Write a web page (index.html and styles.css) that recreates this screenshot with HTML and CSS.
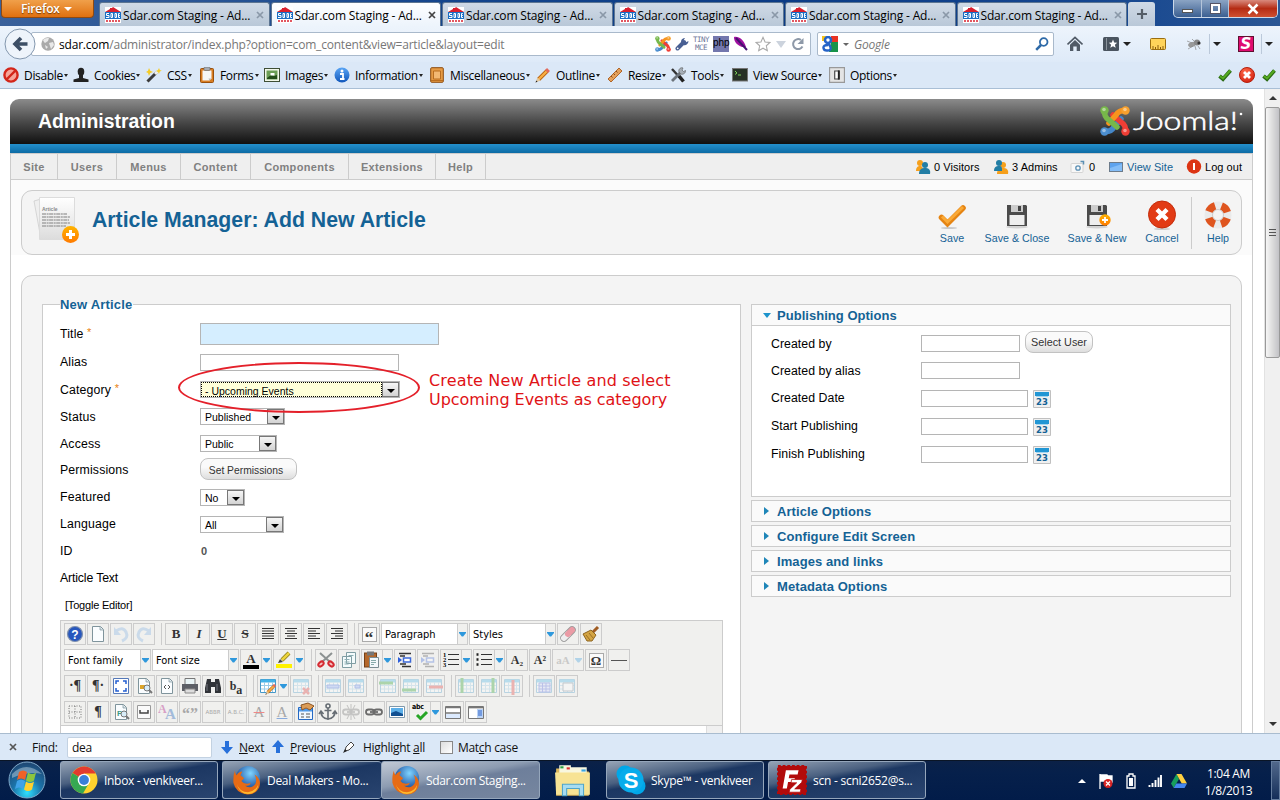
FILE: index.html
```html
<!DOCTYPE html>
<html lang="en">
<head>
<meta charset="utf-8">
<title>Sdar.com Staging - Administration</title>
<link rel="stylesheet" href="styles.css">
</head>
<body>
<svg class="gradients" aria-hidden="true">
  <defs>
    <linearGradient id="gOrange" x1="0" y1="0" x2="0" y2="1"><stop offset="0" stop-color="#ffb400"/><stop offset="1" stop-color="#ff7a00"/></linearGradient>
    <radialGradient id="gRed" cx=".4" cy=".3" r=".8"><stop offset="0" stop-color="#ff6a4a"/><stop offset="1" stop-color="#d01c0c"/></radialGradient>
    <linearGradient id="gBlue" x1="0" y1="0" x2="0" y2="1"><stop offset="0" stop-color="#5aa5f5"/><stop offset="1" stop-color="#1157bb"/></linearGradient>
    <radialGradient id="gFox" cx=".6" cy=".3" r=".7"><stop offset="0" stop-color="#7fd4ff"/><stop offset="1" stop-color="#113f94"/></radialGradient>
    <radialGradient id="gOrb" cx=".5" cy=".85" r=".9"><stop offset="0" stop-color="#2fe0ff"/><stop offset=".45" stop-color="#1b72a8"/><stop offset="1" stop-color="#20406a"/></radialGradient>
    <linearGradient id="gPaper" x1="0" y1="0" x2="0" y2="1"><stop offset="0" stop-color="#fff"/><stop offset="1" stop-color="#dcdcdc"/></linearGradient>
  </defs>
</svg>
<svg class="sprite" aria-hidden="true">
  <symbol id="fav" viewBox="0 0 16 16"><path fill="#fff" d="M0 0h16v16H0z"/><path fill="#d9202e" d="M0 5 5 2V1h2l1-1 8 5z"/><rect y="5" width="16" height="7" fill="#1a6fc4"/><path d="M4 6.500H1.500v2H4v2H1M6 6.500v4h1.500v-4zM10 6.500v4h1.500v-4zM14.800 6.500H13.500v4h1.500M13.500 8.500h1.300" stroke="#fff" fill="none"/><path d="M1 14h14" stroke="#d9202e" stroke-width="1.500" stroke-dasharray="2 1"/></symbol>
  <symbol id="cross" viewBox="0 0 8 8"><path d="m1 1 6 6m0-6-6 6" stroke="currentColor" stroke-width="1.700"/></symbol>
  <symbol id="plus" viewBox="0 0 12 12"><path d="M6 1v10M1 6h10" stroke="#555e68" stroke-width="2.200"/></symbol>
  <symbol id="back" viewBox="0 0 32 32"><circle cx="16" cy="16" r="15" fill="#eef4fb" stroke="#8397ae"/><path d="M23.500 16H11m6-6-6 6 6 6" fill="none" stroke="#3d4f66" stroke-width="3.600"/></symbol>
  <symbol id="globe" viewBox="0 0 14 14"><circle cx="7" cy="7" r="6.700" fill="#aaa"/><path d="M2 3c2-2 4-2 6-2L7 4 4 6 3 5zM8 6l4-1 1 3-3 4-1-3zM4 8l3 2-2 2z" fill="#e9e9e9"/></symbol>
  <symbol id="joomla" viewBox="0 0 30 30"><g fill="none" stroke-width="5.500" stroke-linecap="round"><path id="jarm" d="M4.500 4.500Q4 11 9 14L17 21" stroke="#4587c8" transform="rotate(-90 15 15)"/><path d="M4.500 4.500Q4 11 9 14L17 21" stroke="#ef3e35" transform="rotate(180 15 15)"/><path d="M4.500 4.500Q4 11 9 14L17 21" stroke="#f7941e" transform="rotate(90 15 15)"/><path d="M4.500 4.500Q4 11 9 14L17 21" stroke="#77b84a"/></g><circle cx="4.500" cy="4.500" r="4.200" fill="#77b84a"/><circle cx="25.500" cy="4.500" r="4.200" fill="#f7a02e"/><circle cx="25.500" cy="25.500" r="4.200" fill="#ef3e35"/><circle cx="4.500" cy="25.500" r="4.200" fill="#4c8fd0"/><g fill="#fff" opacity=".45"><circle cx="4" cy="3.500" r="1.800"/><circle cx="25" cy="3.500" r="1.800"/><circle cx="25" cy="24.500" r="1.800"/><circle cx="4" cy="24.500" r="1.800"/></g></symbol>
  <symbol id="wrench" viewBox="0 0 14 14"><path d="M2.500 11.500 9 5" stroke="#485f93" stroke-width="4" stroke-linecap="round"/><path d="M6 5c0-3 2-4 4-4L8.500 3.500l2 2L13.500 4c0 3-3 5-5 4z" fill="#485f93"/><circle cx="2.700" cy="11.300" r=".9" fill="#fff"/></symbol>
  <symbol id="quill" viewBox="0 0 14 16"><path d="M0 1c5-1 10 3 12 10l-4 0C3 9 0 6 0 1z" fill="#a010a0"/><path d="m2 2 11 12" stroke="#451070" stroke-width="2"/></symbol>
  <symbol id="star" viewBox="0 0 18 18"><path d="m9 1.500 2.300 5.200 5.500.6-4.100 3.700 1.200 5.500L9 13.700l-4.900 2.800 1.200-5.500-4.100-3.700 5.500-.6z" fill="#fff" stroke="#a9a9a9" stroke-width="1.200"/></symbol>
  <symbol id="reload" viewBox="0 0 14 14"><path d="M11.500 9.500A5 5 0 1 1 10 3" fill="none" stroke="#8e99a8" stroke-width="2"/><path d="M12.500 1v6h-6z" fill="#8e99a8"/></symbol>
  <symbol id="google" viewBox="0 0 16 16"><path fill="#fff" d="M0 0h16v16H0z"/><path d="M9 0h7v6H9z" fill="#ea3323"/><path d="M9 6h7v10H7z" fill="#17934a"/><path d="M0 0h4v5H0z" fill="#f6c31a"/><circle cx="6" cy="4" r="3" fill="#fff" stroke="#2463c7" stroke-width="2.600"/><path d="m6 7 2 3q2 4-2 4.500T1.500 12 6 9" fill="#fff" stroke="#2463c7" stroke-width="2.400"/></symbol>
  <symbol id="search" viewBox="0 0 14 14"><circle cx="8.700" cy="5" r="3.800" fill="none" stroke="#2e6aa8" stroke-width="1.800"/><path d="M6 8 1.200 12.800" stroke="#2e6aa8" stroke-width="2.500"/></symbol>
  <symbol id="home" viewBox="0 0 16 16"><path d="M.5 8.500 8 1.500l7.500 7" fill="none" stroke="#505a66" stroke-width="1.700"/><path d="m3 8.700 5-4.600 5 4.600V15H9.700v-4.500H6.300V15H3z" fill="#505a66"/></symbol>
  <symbol id="bookmark" viewBox="0 0 16 14"><rect width="16" height="14" rx="1.500" fill="#4a545f"/><path d="M3.500 1v12" stroke="#8b949d"/><path d="m10 2.500 1.200 3 3 .3-2.300 2 .8 3L10 9.200l-2.700 1.600.8-3-2.300-2 3-.3z" fill="#fff"/></symbol>
  <symbol id="rulerY" viewBox="0 0 16 12"><rect x=".5" y=".5" width="15" height="11" rx="1" fill="#ffd35a" stroke="#9a6d10"/><path d="M3 11V8m2.500 3V9M8 11V7m2.500 4V9M13 11V8" stroke="#8a5d10"/></symbol>
  <symbol id="fly" viewBox="0 0 16 14"><ellipse cx="6" cy="7.500" rx="4" ry="2.500" fill="#999" transform="rotate(-20 6 7.500)"/><circle cx="11" cy="5.500" r="3" fill="#888"/><circle cx="13" cy="6" r="1.600" fill="#333"/><path d="M1 4l5 2m-4 6 5-3m3 4-1-4m5 3-2-3M6 2l3 3" stroke="#888" stroke-width=".7"/></symbol>
  <symbol id="check" viewBox="0 0 14 12"><path d="m1.500 7 3.500 3L12.500 1.500" fill="none" stroke="#2b6a14" stroke-width="3.800"/><path d="m1.800 7 3.200 2.500 7.200-8" fill="none" stroke="#55aa20" stroke-width="2"/></symbol>
  <symbol id="redx" viewBox="0 0 16 16"><circle cx="8" cy="8" r="7.500" fill="url(#gRed)" stroke="#b5200e"/><path d="m5 5 6 6m0-6-6 6" stroke="#fff" stroke-width="2.800"/></symbol>
  <symbol id="deny" viewBox="0 0 16 16"><circle cx="8" cy="8" r="6.600" fill="#f6a59a" stroke="#d3261a" stroke-width="2.400"/><path d="m12.500 3.500-9 9" stroke="#d3261a" stroke-width="2.400"/></symbol>
  <symbol id="person" viewBox="0 0 16 16"><ellipse cx="8" cy="4.800" rx="3.300" ry="4" fill="#222"/><path d="M6 8h4v3l5.500 1.500V15H.5v-2.500L6 11z" fill="#222"/></symbol>
  <symbol id="wand" viewBox="0 0 16 16"><path d="m1.500 14.500 9-9" stroke="#3b3b3b" stroke-width="3"/><path d="m9 7 2-2" stroke="#eee" stroke-width="3"/><path d="m3 1 1.300 2.700L7 5 4.300 6 3 9 2 6 0 5l2-1.300zM13 1l.8 2 2 .8-2 .8L13 7l-1-2-2-1 2-1z" fill="#f5cc27"/></symbol>
  <symbol id="clip" viewBox="0 0 16 16"><rect x="1.500" y="1.500" width="13" height="14" rx="1" fill="#d87d22" stroke="#9a500c"/><path d="M3.500 3.500h9v8l-2 2h-7z" fill="#f6f6f6"/><path d="M12.500 11.500h-3l1 2z" fill="#bbb"/><rect x="5" width="6" height="3.500" rx="1" fill="#a6aab0" stroke="#666" stroke-width=".6"/></symbol>
  <symbol id="image" viewBox="0 0 16 14"><rect x=".5" y=".5" width="15" height="13" fill="#f2f7ea" stroke="#3f4f36"/><path d="M2.500 2.500h11v9h-11z" fill="#6b9d55"/><path d="M3 10 7 7l3 1 3-1v4H3z" fill="#244d1a"/><path d="M6.500 5h4v2.500h-4z" fill="#fff"/></symbol>
  <symbol id="info" viewBox="0 0 16 16"><circle cx="8" cy="8" r="7.500" fill="url(#gBlue)"/><circle cx="8" cy="4" r="1.500" fill="#fff"/><path d="M6 7h3v5h1.500M6 12h3" stroke="#fff" stroke-width="1.800" fill="none"/></symbol>
  <symbol id="book" viewBox="0 0 14 16"><rect x=".7" y=".7" width="12.600" height="14.600" rx="1" fill="#e69b45" stroke="#8c4b0e"/><path d="M3.500 4h7v8h-7zM1 13.500h12" fill="#f3b872" stroke="#b96d1f"/></symbol>
  <symbol id="pencil" viewBox="0 0 16 16"><path d="M3.500 12.500 12 4" stroke="#b45f12" stroke-width="4"/><path d="M3.500 12.500 12 4" stroke="#f9ae43" stroke-width="2.400"/><path d="m11.500 4.500 2-2" stroke="#e36a5c" stroke-width="4"/><path d="m2.500 10.500 3 3L.5 15.500z" fill="#e3c79c"/><path d="m.5 15.500.8-2 1.300 1.200z" fill="#222"/></symbol>
  <symbol id="rule" viewBox="0 0 16 16"><path d="M1 12 12 1l3 3L4 15z" fill="#e4a05a" stroke="#b0662a"/><path d="m4 9 1.500 1.500M6.500 6.500 8 8M9 4l1.500 1.500" stroke="#8a4a18"/></symbol>
  <symbol id="tools" viewBox="0 0 16 16"><path d="m2 2 11 12" stroke="#333" stroke-width="2.400"/><path d="m9 9 4.500 5.500" stroke="#222" stroke-width="3.500"/><path d="M2 14 11 5" stroke="#6d747c" stroke-width="2.800"/><path d="M9 5c-1-3 2-5 4-4L12 3l1.500 1.500 2-1C16 6 13 8 10.500 7z" fill="#a7afb7" stroke="#555" stroke-width=".6"/></symbol>
  <symbol id="term" viewBox="0 0 16 14"><rect x=".5" y=".5" width="15" height="12.500" fill="#263126" stroke="#777"/><path d="m3 3 2 2-2 1.500M6 7h3" stroke="#7bd25a" fill="none"/></symbol>
  <symbol id="opt" viewBox="0 0 14 14"><path d="M.5.500h13v13H.5z" fill="#e4e4e4" stroke="#999"/><path d="M5 3.500h4v7H5z" fill="#fff" stroke="#444"/><path d="M8.500 3v8" stroke="#222" stroke-width="1.500"/></symbol>
  <symbol id="article" viewBox="0 0 48 50"><path d="m1 5 7-2 5 38-5 2z" fill="#efefef" stroke="#c9c9c9" stroke-width=".7"/><path d="M6.500 1.500h35v42h-35z" fill="url(#gPaper)" stroke="#dcdcdc"/><text x="9" y="15" font-family="Liberation Sans" font-weight="700" font-size="5" fill="#888">Article</text><path d="M9 18h25M9 21h28M9 24h27M9 27h28M9 30h24" stroke="#a4a4a4" stroke-width="1.300" stroke-dasharray="4 .6 2 .5"/><circle cx="37.500" cy="38.500" r="8.500" fill="url(#gOrange)"/><path d="M37.500 34v9M33 38.500h9" stroke="#fff" stroke-width="3"/></symbol>
  <symbol id="save" viewBox="0 0 30 30"><ellipse cx="12" cy="28" rx="8" ry="1" fill="#c9c9c9"/><path d="m4.500 17.500 6 6L26 8" fill="none" stroke="#e58412" stroke-width="5.600" stroke-linecap="round"/><path d="m5 16.500 5.500 5.500L26 7" fill="none" stroke="#faa936" stroke-width="3"/></symbol>
  <symbol id="floppy" viewBox="0 0 30 30"><ellipse cx="15" cy="27" rx="11" ry="1.500" fill="#d2d2d2"/><path d="M5 5h19l1 1v20H5z" fill="#4b4b4b"/><path d="M9 5h12v7H9z" fill="#ccc"/><path d="M16 6h3v5h-3z" fill="#444"/><path d="M7.500 15h15v10h-15z" fill="#eee"/></symbol>
  <symbol id="badge" viewBox="0 0 12 12"><circle cx="6" cy="6" r="5.700" fill="url(#gOrange)"/><path d="M6 3v6M3 6h6" stroke="#fff" stroke-width="1.800"/></symbol>
  <symbol id="cancel" viewBox="0 0 30 30"><ellipse cx="15" cy="29" rx="8" ry="1" fill="#ccc"/><circle cx="15" cy="14.500" r="13.500" fill="#e23b15" stroke="#c42c0a"/><path d="m10 9.500 10 10m0-10-10 10" stroke="#fff" stroke-width="4.400"/></symbol>
  <symbol id="help" viewBox="0 0 30 30"><circle cx="15" cy="15" r="9.500" fill="none" stroke="#eaeaea" stroke-width="8"/><circle cx="15" cy="15" r="9.500" fill="none" stroke="#df551f" stroke-width="8" stroke-dasharray="8.500 6.420" stroke-dashoffset="11.700"/><circle cx="15" cy="15" r="5.500" fill="#f4f4f4" stroke="#ccc"/></symbol>
  <symbol id="users" viewBox="0 0 16 16"><circle cx="5" cy="4" r="3" fill="#f6a01c"/><path d="M1 12c0-4 2-5 4-5s3 1 3 5z" fill="#f6a01c"/><circle cx="10" cy="6" r="3" fill="#237ea5"/><path d="M4 15c0-5 3-6 6-6s6 1 5 6z" fill="#237ea5"/></symbol>
  <symbol id="admins" viewBox="0 0 16 16"><circle cx="10" cy="6" r="3" fill="#f6a01c"/><path d="M4 15c0-5 3-6 6-6s6 1 5 6z" fill="#f6a01c"/><circle cx="6" cy="4" r="3" fill="#237ea5"/><path d="M1 12c0-4 2-5 5-5s3 1 3 5z" fill="#237ea5"/></symbol>
  <symbol id="mail" viewBox="0 0 16 16"><rect x="1" y="4.500" width="12" height="9" rx="1" fill="#f8f8f8" stroke="#d4d4d4"/><circle cx="8" cy="9" r="2.200" fill="none" stroke="#5b8fb4" stroke-width="1.300"/><path d="M10.500 2.500h3v3" fill="none" stroke="#5b8fb4" stroke-width="1.500"/></symbol>
  <symbol id="screen" viewBox="0 0 16 16"><rect x="1.500" y="3.500" width="13" height="9" fill="#5ea3ee" stroke="#6c7b8b"/><path d="m2 9 12-4v7H2z" fill="#84bdf7"/></symbol>
  <symbol id="power" viewBox="0 0 16 16"><circle cx="8" cy="7.500" r="7.200" fill="#dc3413"/><path d="M8 4v7" stroke="#fff" stroke-width="2"/></symbol>
  <symbol id="cal" viewBox="0 0 18 18"><path d="M.5.500h17v17H.5z" fill="#f0f0f0" stroke="#c0c0c0"/><path d="M2 2h14v4H2z" fill="#2196d4"/><path d="M3 6h12v1H3z" fill="#a5d5ee"/><text x="9" y="15" text-anchor="middle" font-family="DejaVu Sans" font-size="8.500" font-weight="700" fill="#146295">23</text></symbol>

  <symbol id="page" viewBox="0 0 20 20"><path d="M4.500 2.500h8l3 3v12h-11z" fill="#fafdff" stroke="#7f949c"/><path d="M12 3v3h3" fill="#d3e2e6" stroke="#7f949c" stroke-width=".7"/></symbol>
  <symbol id="qmark" viewBox="0 0 20 20"><circle cx="10" cy="10" r="7.500" fill="#2757bd" stroke="#8091ad" stroke-width="1.200"/><text x="10" y="14.500" font-family="Liberation Sans" font-weight="700" font-size="12" fill="#fff" text-anchor="middle">?</text></symbol>
  <symbol id="undo" viewBox="0 0 20 20"><path d="M5 7q7-5 10 1t-4 9" fill="none" stroke="#7dafe2" stroke-width="3"/><path d="M3 3v8h7z" fill="#7dafe2"/></symbol>
  <symbol id="jfull" viewBox="0 0 20 20"><path d="M4 4.500h12M4 7h12m-12 2.500h12M4 12h12M4 14.500h12" stroke="#333" stroke-width="1.200"/></symbol>
  <symbol id="jcenter" viewBox="0 0 20 20"><path d="M4 4.500h12M6 7h8m-10 2.500h12M6 12h8M4 14.500h12" stroke="#333" stroke-width="1.200"/></symbol>
  <symbol id="jleft" viewBox="0 0 20 20"><path d="M4 4.500h12M4 7h8m-8 2.500h12M4 12h8M4 14.500h12" stroke="#333" stroke-width="1.200"/></symbol>
  <symbol id="jright" viewBox="0 0 20 20"><path d="M4 4.500h12M8 7h8m-12 2.500h12M8 12h8M4 14.500h12" stroke="#333" stroke-width="1.200"/></symbol>
  <symbol id="box" viewBox="0 0 20 20"><path d="M3.500 3.500h13v13h-13z" fill="#fafafa" stroke="#999"/></symbol>
  <symbol id="eraser" viewBox="0 0 20 20"><path d="m6 14 8-8" stroke="#999" stroke-width="7.500" stroke-linecap="round"/><path d="m6 14 4-4" stroke="#eee" stroke-width="6" stroke-linecap="round"/><path d="m10 10 4-4" stroke="#eb9ba5" stroke-width="6" stroke-linecap="round"/></symbol>
  <symbol id="broom" viewBox="0 0 20 20"><path d="m12 8 5-5" stroke="#a05c22" stroke-width="3"/><path d="m2 10 8-4 5 5-4 6H6z" fill="#d3a342" stroke="#8d6420"/><path d="m5 11 4 5M8 9l4 5" stroke="#8d6420" stroke-width=".8"/></symbol>
  <symbol id="hl" viewBox="0 0 20 20"><path d="M2 14h16v4H2z" fill="#fff200"/><path d="m8 10 7-7" stroke="#8a7b18" stroke-width="4"/><path d="m8 10 7-7" stroke="#ebd43c" stroke-width="2.500"/><path d="m4 13 2-4 3 3z" fill="#444"/></symbol>
  <symbol id="cut" viewBox="0 0 20 20"><path d="m4 3 10 9m2-9L6 12" stroke="#8c9292" stroke-width="2"/><ellipse cx="5" cy="14" rx="3" ry="2" fill="#f5c3c3" stroke="#d52b32" stroke-width="2" transform="rotate(-40 5 14)"/><ellipse cx="15" cy="14" rx="3" ry="2" fill="#f5c3c3" stroke="#d52b32" stroke-width="2" transform="rotate(40 15 14)"/></symbol>
  <symbol id="copy" viewBox="0 0 20 20"><path d="M7.500 2.500h9v11h-9zM3.500 6.500h9v11h-9z" fill="#f4fbfc" stroke="#7f9da3"/><path d="M9.500 5.500h5m-9 4h5m-5 2.500h5m-5 2h4" stroke="#8daeb3"/></symbol>
  <symbol id="paste" viewBox="0 0 20 20"><rect x="2.500" y="3" width="12" height="14" fill="#b5682b" stroke="#744018"/><path d="M5 1.500h7v4H5z" fill="#777"/><path d="M7.500 7.500h9v10h-9z" fill="#f3f8fa" stroke="#7b8c92"/><path d="M9 10.500h5m-5 2h5m-5 2h3" stroke="#8aa"/></symbol>
  <symbol id="indent" viewBox="0 0 20 20"><path d="M4 3.500h12M7 16.500h9M5 6h5m-5 8h6" stroke="#333" stroke-width="1.400"/><path d="M8.500 8h7v4h-7z" fill="#fff" stroke="#3b68d8" stroke-width="1.500"/><path d="M3 7v6l4-3z" fill="#2b5ddb"/></symbol>
  <symbol id="ol" viewBox="0 0 20 20"><path d="M7 4.500h11M7 9.500h11M7 14.500h11" stroke="#333" stroke-width="1.200"/><g font-family="Liberation Serif" font-weight="700" font-size="6.500"><text x="2" y="7">1</text><text x="2" y="12">2</text><text x="2" y="17">3</text></g></symbol>
  <symbol id="ul" viewBox="0 0 20 20"><path d="M7 4.500h11M7 9.500h11M7 14.500h11" stroke="#333" stroke-width="1.200"/><path d="M2.500 4.500h2m-2 5h2m-2 5h2" stroke="#222" stroke-width="2.400"/></symbol>
  <symbol id="full" viewBox="0 0 20 20"><path d="M2.500 2.500h15v15h-15z" fill="#fff" stroke="#5478b8"/><path d="M5 8V5h3m4 0h3v3m0 4v3h-3m-4 0H5v-3" stroke="#235fd2" stroke-width="1.500" fill="none"/></symbol>
  <symbol id="print" viewBox="0 0 20 20"><path d="M5 2.500h10V9H5z" fill="#e9f4f6" stroke="#777"/><path d="M2 8h16v7H2z" fill="#5c5f66"/><path d="M5 13h10v4H5z" fill="#ddd" stroke="#888"/></symbol>
  <symbol id="bino" viewBox="0 0 20 20"><path d="M4 3h4v3h4V3h4l2 9v5h-6v-6H8v6H2v-5z" fill="#303338"/><path d="M4 8v7m10-7v7" stroke="#70757c"/></symbol>
  <symbol id="table" viewBox="0 0 20 20"><path d="M2.500 3.500h15v13h-15z" fill="#fff" stroke="#4598c8"/><path d="M3 5h14" stroke="#42b3e9" stroke-width="3"/><path d="M3 9.500h14M3 13h14M6.500 6v10m4-10v10m4-10v10" stroke="#9acbe7"/></symbol>
  <symbol id="rowg" viewBox="0 0 20 20"><use href="#table"/><path d="M1 7h14" stroke="#1f9b22" stroke-width="3"/></symbol>
  <symbol id="rowb" viewBox="0 0 20 20"><use href="#table"/><path d="M1 14h14" stroke="#1f9b22" stroke-width="3"/></symbol>
  <symbol id="rowr" viewBox="0 0 20 20"><use href="#table"/><path d="M5 11h14" stroke="#df3434" stroke-width="3"/></symbol>
  <symbol id="colg" viewBox="0 0 20 20"><use href="#table"/><path d="M6 2v15" stroke="#1f9b22" stroke-width="3"/></symbol>
  <symbol id="colh" viewBox="0 0 20 20"><use href="#table"/><path d="M14 2v15" stroke="#1f9b22" stroke-width="3"/></symbol>
  <symbol id="colr" viewBox="0 0 20 20"><use href="#table"/><path d="M11 4v15" stroke="#df3434" stroke-width="3"/></symbol>
  <symbol id="anchor" viewBox="0 0 20 20"><g fill="none" stroke="#666d74" stroke-width="1.600"><circle cx="10" cy="4" r="2"/><path d="M10 6v12M6.500 8.500h7M3 10q0 6 7 7 7-1 7-7M1 12l2-3 2.500 3m9 0L17 9l2 3"/></g></symbol>
  <symbol id="link" viewBox="0 0 20 20"><g fill="none" stroke="#6b6b6b" stroke-width="1.800"><rect x="2" y="7.500" width="8" height="5" rx="2.500"/><rect x="10" y="7.500" width="8" height="5" rx="2.500"/><path d="M6 10h8"/></g></symbol>
  <symbol id="pic" viewBox="0 0 20 20"><path d="M2.500 4.500h15v11h-15z" fill="#fff" stroke="#7f98ab"/><path d="M4 6h12v8H4z" fill="#5cafe8"/><path d="m4 11 5-2 7 3v2H4z" fill="#114f91"/></symbol>
  <symbol id="split" viewBox="0 0 20 20"><path d="M2.500 4.500h15v12h-15z" fill="#fff" stroke="#777"/><path d="M3 5.500h14M3 11h14" stroke="#777" stroke-width="1.500"/><path d="M3 12h14v4H3z" fill="#dceafe"/></symbol>
  <symbol id="tmpl" viewBox="0 0 20 20"><path d="M2.500 4.500h15v12h-15z" fill="#fff" stroke="#777"/><path d="M3 5.500h14" stroke="#777" stroke-width="1.700"/><path d="M11 7h6v9h-6z" fill="#bcd4f6"/><path d="M12 9h4m-4 2h4m-4 2h4" stroke="#2d62c9"/></symbol>
  <symbol id="dots" viewBox="0 0 20 20"><path d="M4 4h12v12H4zM10 4v12M4 10h12" fill="none" stroke="#777" stroke-dasharray="1 1.500"/></symbol>

  <symbol id="adown" viewBox="0 0 12 14"><path d="M4 1h4v6h4l-6 7-6-7h4z" fill="#2770da"/></symbol>
  <symbol id="marker" viewBox="0 0 14 14"><path d="m4 7 5-5 3 3-5 5-4 1z" fill="#fff" stroke="#444"/><path d="m1 13 2-4 2 2z" fill="#222"/></symbol>
  <symbol id="orb" viewBox="0 0 38 38"><circle cx="19" cy="19" r="18" fill="url(#gOrb)" stroke="#7fa9ca"/><path d="M4 13Q18-1 34 13 20 10 4 17z" fill="#fff" opacity=".35"/><path d="M11 11q4-3 8 0l-2 8q-4-3-8 0z" fill="#ef6227"/><path d="M20 11.500q4 3 8 0l-2 8q-4 3-8 0z" fill="#8cc63e"/><path d="M9 20q4-3 8 0l-2 8q-4-3-8 0z" fill="#3fa2e8"/><path d="M18 20.500q4 3 8 0l-2 8q-4 3-8 0z" fill="#ffd02e"/></symbol>
  <symbol id="chrome" viewBox="0 0 28 28"><circle cx="14" cy="14" r="13.500" fill="#ffd22e"/><path d="M14 14 2.500 7A13.500 13.500 0 0 1 25.800 7.500H14z" fill="#e33b2e"/><path d="M2.500 7A13.500 13.500 0 0 0 13 27.500L19 17l-5-3z" fill="#36a852"/><circle cx="14" cy="14" r="6.300" fill="#fff"/><circle cx="14" cy="14" r="4.900" fill="#3a7fd9"/></symbol>
  <symbol id="firefox" viewBox="0 0 32 32"><circle cx="17" cy="14" r="13" fill="url(#gFox)"/><path d="M3 6q0 3 2 5 2-4 6-4l-2 4 4 3-3 3q4 5 10 2-1 4-6 3 7 4 11-2 2-5-1-10 8 5 5 14-4 8-13 7.500Q4 30 1.500 19 1 11 3 6z" fill="#e66b15"/><path d="M5 20q3 9 12 9 8-1 11-8-1 9-11 10-9 0-12-11z" fill="#ffba2d"/></symbol>
  <symbol id="folder" viewBox="0 0 36 32"><path d="M2 5h13l2 3h16v23H2z" fill="#dcb75b"/><path d="M5 2h11v8H5zM16 4h15v7H16z" fill="#f8f7df"/><path d="M6 3h3v2H6z" fill="#2ca245"/><path d="M12 4h3v2h-3z" fill="#d33"/><path d="M26 6h4v2h-4z" fill="#38a5e1"/><path d="M1 9h33v21H2z" fill="#f7e394"/><path d="M8 31V20h20v11h-4v-7H12v7z" fill="#a6dcf2" stroke="#4ea5cb"/></symbol>
  <symbol id="skype" viewBox="0 0 30 30"><circle cx="9" cy="9" r="8.500" fill="#00a7e8"/><circle cx="21" cy="21" r="8.500" fill="#00a7e8"/><circle cx="15" cy="15" r="12.500" fill="#08aceb"/><text x="15" y="23" text-anchor="middle" font-family="Liberation Sans" font-size="22" font-weight="700" fill="#fff">S</text></symbol>
  <symbol id="zilla" viewBox="0 0 32 32"><path d="M1 1h30v30H1z" fill="#b20b0b" stroke="#b20b0b" stroke-width="2" stroke-dasharray="3 2"/><path d="M6 25 9.500 5.500H23L22 10h-8.700l-.8 4H19l-.7 4h-6.500L10.500 25z" fill="#fff"/><path d="M15.500 15.500H27l-.6 3-7.500 7h6.600l-.7 3.500H13l.6-3 7.400-7h-6z" fill="#fff" stroke="#b20b0b" stroke-width=".8"/></symbol>
  <symbol id="flag" viewBox="0 0 16 16"><path d="M2 1v15M3 2h6l1 1h4v6H9L8 8H3z" fill="#fff" stroke="#fff" stroke-width="1.300"/><circle cx="10" cy="10.500" r="4.500" fill="#d52222"/><path d="m8 8.500 4 4m0-4-4 4" stroke="#fff" stroke-width="1.300"/></symbol>
  <symbol id="batt" viewBox="0 0 10 16"><path d="M3 1h4v2h2v12H1V3h2z" fill="none" stroke="#fff" stroke-width="1.300"/><path d="M3 5h4v8H3z" fill="#fff"/></symbol>
  <symbol id="signal" viewBox="0 0 14 14"><path d="M1.500 13v-2m3 2V9m3 4V6m3 7V3.500M13 13V1" stroke="#fff" stroke-width="1.900"/></symbol>
  <symbol id="drive" viewBox="0 0 16 14"><path d="M5.500 0 0 9.500 2.700 14 8 5z" fill="#179e5b"/><path d="M5.500 0h5L16 9.500h-5.300z" fill="#ffd040"/><path d="m2.700 14 2.600-4.500H16L13.500 14z" fill="#4486ef"/></symbol>
</svg>

<header class="tabbar">
  <div class="fx-menu">Firefox <span class="tri tri-white"></span></div>
  <nav class="tabs">
    <div class="tab"><svg class="i16"><use href="#fav"/></svg><span>Sdar.com Staging - Ad...</span><svg class="i8"><use href="#cross"/></svg></div>
    <div class="tab tab-active"><svg class="i16"><use href="#fav"/></svg><span>Sdar.com Staging - Ad...</span><svg class="i8"><use href="#cross"/></svg></div>
    <div class="tab"><svg class="i16"><use href="#fav"/></svg><span>Sdar.com Staging - Ad...</span><svg class="i8"><use href="#cross"/></svg></div>
    <div class="tab"><svg class="i16"><use href="#fav"/></svg><span>Sdar.com Staging - Ad...</span><svg class="i8"><use href="#cross"/></svg></div>
    <div class="tab"><svg class="i16"><use href="#fav"/></svg><span>Sdar.com Staging - Ad...</span><svg class="i8"><use href="#cross"/></svg></div>
    <div class="tab"><svg class="i16"><use href="#fav"/></svg><span>Sdar.com Staging - Ad...</span><svg class="i8"><use href="#cross"/></svg></div>
    <div class="tab-new"><svg class="i12"><use href="#plus"/></svg></div>
  </nav>
  <div class="winctl">
    <span><i class="w-min"></i></span><span><i class="w-max"></i></span><span class="w-close"><svg class="i12"><use href="#cross"/></svg></span>
  </div>
</header>

<div class="navbar">
  <svg class="back"><use href="#back"/></svg>
  <div class="url">
    <svg class="i14"><use href="#globe"/></svg>
    <span class="address"><b>sdar.com</b>/administrator/index.php?option=com_content&amp;view=article&amp;layout=edit</span>
    <div class="url-icons">
      <svg class="i16"><use href="#joomla"/></svg>
      <svg class="i14"><use href="#wrench"/></svg>
      <span class="tiny">TINY<br>MCE</span>
      <span class="php">php</span>
      <svg class="i16"><use href="#quill"/></svg>
      <svg class="i16"><use href="#star"/></svg>
      <span class="tri tri-hollow"></span>
      <svg class="i14"><use href="#reload"/></svg>
    </div>
  </div>
  <div class="search"><svg class="i16"><use href="#google"/></svg><span class="tri tri-gray"></span><em>Google</em><svg class="i14"><use href="#search"/></svg></div>
  <div class="addons">
    <svg class="i16"><use href="#home"/></svg>
    <svg class="i16"><use href="#bookmark"/></svg>
    <span class="tri"></span>
    <svg class="i16"><use href="#rulerY"/></svg>
    <svg class="i16"><use href="#fly"/></svg>
    <span class="tri tri-div"></span>
    <span class="ess">S</span>
    <span class="tri tri-div"></span>
  </div>
</div>

<div class="devbar">
  <span><svg class="i16"><use href="#deny"/></svg>Disable<i class="tri"></i></span>
  <span><svg class="i16"><use href="#person"/></svg>Cookies<i class="tri"></i></span>
  <span><svg class="i16"><use href="#wand"/></svg>CSS<i class="tri"></i></span>
  <span><svg class="i16"><use href="#clip"/></svg>Forms<i class="tri"></i></span>
  <span><svg class="i16"><use href="#image"/></svg>Images<i class="tri"></i></span>
  <span><svg class="i16"><use href="#info"/></svg>Information<i class="tri"></i></span>
  <span><svg class="i16"><use href="#book"/></svg>Miscellaneous<i class="tri"></i></span>
  <span><svg class="i16"><use href="#pencil"/></svg>Outline<i class="tri"></i></span>
  <span><svg class="i16"><use href="#rule"/></svg>Resize<i class="tri"></i></span>
  <span><svg class="i16"><use href="#tools"/></svg>Tools<i class="tri"></i></span>
  <span><svg class="i16"><use href="#term"/></svg>View Source<i class="tri"></i></span>
  <span><svg class="i16"><use href="#opt"/></svg>Options<i class="tri"></i></span>
  <div class="dev-status"><svg class="i14"><use href="#check"/></svg><svg class="i16"><use href="#redx"/></svg><svg class="i14"><use href="#check"/></svg></div>
</div>

<div class="viewport">
  <main class="page">
    <div class="brand">
      <h1>Administration</h1>
      <svg class="brand-logo" viewBox="0 0 146 32"><use href="#joomla" x="0" y="1" width="30" height="30"/><text x="33" y="25" font-family="Lato" font-weight="300" font-size="25" textLength="105" lengthAdjust="spacingAndGlyphs" fill="#fff" stroke="#fff" stroke-width=".5">Joomla!</text><circle cx="141" cy="9" r="1.300" fill="#fff"/></svg>
    </div>
    <div class="menubar">
      <nav class="menu"><a>Site</a><a>Users</a><a>Menus</a><a>Content</a><a>Components</a><a>Extensions</a><a>Help</a></nav>
      <div class="status">
        <span><svg class="i16"><use href="#users"/></svg>0 Visitors</span>
        <span><svg class="i16"><use href="#admins"/></svg>3 Admins</span>
        <span><svg class="i16"><use href="#mail"/></svg>0</span>
        <span class="blue"><svg class="i16"><use href="#screen"/></svg>View Site</span>
        <span><svg class="i16"><use href="#power"/></svg>Log out</span>
      </div>
    </div>
    <div class="titlewrap">
      <section class="titlebox">
        <svg class="article-icon"><use href="#article"/></svg>
        <h2>Article Manager: Add New Article</h2>
        <div class="actions">
          <a><svg class="i30"><use href="#save"/></svg>Save</a>
          <a><svg class="i30"><use href="#floppy"/></svg>Save &amp; Close</a>
          <a><svg class="i30"><use href="#floppy"/><use href="#badge" x="17" y="14" width="12" height="12"/></svg>Save &amp; New</a>
          <a><svg class="i30"><use href="#cancel"/></svg>Cancel</a>
          <a class="divided"><svg class="i30"><use href="#help"/></svg>Help</a>
        </div>
      </section>
    </div>
    <section class="editbox">
      <div class="article-form">
        <h3>New Article</h3>
        <div class="rows">
          <label>Title <sup>*</sup></label><div><span class="input in-title"></span></div>
          <label>Alias</label><div><span class="input in-alias"></span></div>
          <label>Category <sup>*</sup></label><div><span class="select s-cat"><b>- Upcoming Events</b><i></i></span></div>
          <label>Status</label><div><span class="select s-status"><b>Published</b><i></i></span></div>
          <label>Access</label><div><span class="select s-access"><b>Public</b><i></i></span></div>
          <label>Permissions</label><div><span class="pill pill-perm">Set Permissions</span></div>
          <label>Featured</label><div><span class="select s-feat"><b>No</b><i></i></span></div>
          <label>Language</label><div><span class="select s-lang"><b>All</b><i></i></span></div>
          <label>ID</label><div><span class="idval">0</span></div>
          <label class="tight">Article Text</label><div></div>
        </div>
        <div class="toggle">[Toggle Editor]</div>
        <div class="editor">
          <div class="tools">
            <div class="trow">
              <span class="btn"><svg><use href="#qmark"/></svg></span><span class="btn"><svg><use href="#page"/></svg></span><span class="btn off"><svg><use href="#undo"/></svg></span><span class="btn off flip"><svg><use href="#undo"/></svg></span><i class="sep"></i>
              <span class="btn serif">B</span><span class="btn serif it">I</span><span class="btn serif un">U</span><span class="btn serif st">S</span><span class="btn"><svg><use href="#jfull"/></svg></span><span class="btn"><svg><use href="#jcenter"/></svg></span><span class="btn"><svg><use href="#jleft"/></svg></span><span class="btn"><svg><use href="#jright"/></svg></span><i class="sep"></i>
              <span class="btn"><span class="key">“</span></span><span class="list">Paragraph<i></i></span><span class="list">Styles<i></i></span><span class="btn"><svg><use href="#eraser"/></svg></span><span class="btn"><svg><use href="#broom"/></svg></span>
            </div>
            <div class="trow">
              <span class="list">Font family<i></i></span><span class="list">Font size<i></i></span><span class="btn wide"><span class="fore">A</span><i></i></span><span class="btn wide"><svg><use href="#hl"/></svg><i></i></span><i class="sep"></i>
              <span class="btn"><svg><use href="#cut"/></svg></span><span class="btn"><svg><use href="#copy"/></svg></span><span class="btn wide"><svg><use href="#paste"/></svg><i></i></span><span class="btn"><svg><use href="#indent"/></svg></span><span class="btn off"><svg><use href="#indent"/></svg></span><span class="btn wide"><svg><use href="#ol"/></svg><i></i></span><span class="btn wide"><svg><use href="#ul"/></svg><i></i></span><span class="btn serif sm">A₂</span><span class="btn serif sm">A²</span><span class="btn wide off faint"><span class="case">aA</span><i></i></span><span class="btn"><span class="key omega">Ω</span></span><span class="btn"><i class="hr"></i></span>
            </div>
            <div class="trow">
              <span class="btn para">·¶</span><span class="btn para">¶·</span><span class="btn"><svg><use href="#full"/></svg></span><span class="btn"><svg viewBox="0 0 20 20"><use href="#page"/><path d="M6 9h6v4H6z" fill="#dca52a"/><circle cx="13" cy="12" r="3" fill="#d8edf8" stroke="#777"/><path d="m15 14 3 3" stroke="#777" stroke-width="2"/></svg></span><span class="btn"><svg viewBox="0 0 20 20"><use href="#page"/><path d="m9 9-2 2 2 2m2-4 2 2-2 2" fill="none" stroke="#555"/></svg></span><span class="btn"><svg><use href="#print"/></svg></span><span class="btn"><svg><use href="#bino"/></svg></span><span class="btn serif sm"><span class="ba">b<sub>a</sub></span></span><i class="sep"></i>
              <span class="btn wide"><svg viewBox="0 0 20 20"><use href="#table"/><use href="#pencil" x="7" y="7" width="12" height="12"/></svg><i></i></span><span class="btn off"><svg viewBox="0 0 20 20"><use href="#table"/><path d="m12 12 6 6m0-6-6 6" stroke="#d33" stroke-width="2.500"/></svg></span><i class="sep"></i>
              <span class="btn off"><svg viewBox="0 0 20 20"><use href="#table"/><path d="M4 9h12v3H4z" fill="#8bafff" stroke="#2f5edb"/></svg></span><span class="btn off"><svg viewBox="0 0 20 20"><use href="#table"/><path d="M9 9h5v3H9z" fill="#8bafff" stroke="#2f5edb"/></svg></span><i class="sep"></i>
              <span class="btn off"><svg><use href="#rowg"/></svg></span><span class="btn off"><svg><use href="#rowb"/></svg></span><span class="btn off"><svg><use href="#rowr"/></svg></span><i class="sep"></i>
              <span class="btn off"><svg><use href="#colg"/></svg></span><span class="btn off"><svg><use href="#colh"/></svg></span><span class="btn off"><svg><use href="#colr"/></svg></span><i class="sep"></i>
              <span class="btn off"><svg viewBox="0 0 20 20"><use href="#table"/><path d="M5 7h11v9H5zM5 10h11M5 13h11M8.500 7v9M12 7v9" fill="#d3dcff" stroke="#4d61dd"/></svg></span><span class="btn off"><svg viewBox="0 0 20 20"><use href="#table"/><path d="M6 7h10v8H6z" fill="#fff" stroke="#678"/></svg></span>
            </div>
            <div class="trow">
              <span class="btn"><svg><use href="#dots"/></svg></span><span class="btn para">¶</span><span class="btn"><svg viewBox="0 0 20 20"><use href="#page"/><text x="6" y="14" font-family="Liberation Sans" font-size="8" font-weight="700" fill="#3a9a86">P</text><circle cx="13" cy="12" r="3" fill="#d8edf8" stroke="#777"/><path d="m15 14 3 3" stroke="#777" stroke-width="2"/></svg></span><span class="btn"><svg viewBox="0 0 20 20"><use href="#box"/><path d="M6 8v3h8V8" fill="none" stroke="#444" stroke-width="1.500"/></svg></span><span class="btn off2"><svg viewBox="0 0 20 20"><g font-family="Liberation Serif" font-weight="700"><text x="1" y="11" font-size="12" fill="#c050a0">A</text><text x="8" y="17" font-size="15" fill="#5888c8">A</text></g></svg></span><span class="btn off2 quotes">“”</span><span class="btn off2 abbr">ABBR</span><span class="btn off2 abbr">A.B.C.</span><span class="btn off2 serif st red">A</span><span class="btn off2 serif un bl">A</span><span class="btn"><svg viewBox="0 0 20 20"><path d="M3.500 5.500h14v12h-14z" fill="#eef6ff" stroke="#2469c4"/><path d="M4 8h13" stroke="#4f9beb" stroke-width="3"/><path d="M6 12h3m2 0h4m-9 3h3m2 0h4" stroke="#555"/><path d="m6 3 7-2 6 3-4 4-4-2-4 2z" fill="#db9c57" stroke="#8c5424"/></svg></span><span class="btn"><svg><use href="#anchor"/></svg></span><span class="btn off"><svg viewBox="0 0 20 20"><use href="#link"/><path d="M10 2v16M6 3l2 4m6-4-2 4m-6 10 2-4m6 4-2-4" stroke="#666"/></svg></span><span class="btn"><svg><use href="#link"/></svg></span><span class="btn"><svg><use href="#pic"/></svg></span><span class="btn wide"><svg viewBox="0 0 20 20"><text x="2" y="7" font-family="DejaVu Sans Condensed" font-size="7" font-weight="700" textLength="12">abc</text><path d="m7 13 3.500 3.500L17 10" stroke="#26a526" stroke-width="3" fill="none"/></svg><i></i></span><span class="btn"><svg><use href="#split"/></svg></span><span class="btn"><svg><use href="#tmpl"/></svg></span>
            </div>
          </div>
          <div class="canvas"><div class="canvas-bar"></div></div>
        </div>
      </div>
      <aside class="options">
        <section class="acc open">
          <h3><span class="arr arr-down"></span>Publishing Options</h3>
          <div class="pub">
            <label>Created by</label><div><span class="input w100"></span><span class="pill pill-user">Select User</span></div>
            <label>Created by alias</label><div><span class="input w100"></span></div>
            <label>Created Date</label><div><span class="input w108"></span><svg class="i18"><use href="#cal"/></svg></div>
            <label>Start Publishing</label><div><span class="input w108"></span><svg class="i18"><use href="#cal"/></svg></div>
            <label>Finish Publishing</label><div><span class="input w108"></span><svg class="i18"><use href="#cal"/></svg></div>
          </div>
        </section>
        <section class="acc"><h3><span class="arr"></span>Article Options</h3></section>
        <section class="acc"><h3><span class="arr"></span>Configure Edit Screen</h3></section>
        <section class="acc"><h3><span class="arr"></span>Images and links</h3></section>
        <section class="acc"><h3><span class="arr"></span>Metadata Options</h3></section>
      </aside>
    </section>
  </main>
  <div class="scrollbar"><span class="sb-up"></span><div class="thumb"><i></i></div><span class="sb-down"></span></div>
  <div class="ring"></div>
  <p class="note"><span>Create New Article and select</span><br>Upcoming Events as category</p>
</div>

<div class="findbar">
  <svg class="i8"><use href="#cross"/></svg><span class="f-label">Find:</span><span class="f-input">dea</span>
  <span class="f-item f-next"><svg class="i14"><use href="#adown"/></svg><span><u>N</u>ext</span></span>
  <span class="f-item f-prev"><svg class="i14 upside"><use href="#adown"/></svg><span><u>P</u>revious</span></span>
  <span class="f-item f-high"><svg class="i14"><use href="#marker"/></svg><span>Highlight <u>a</u>ll</span></span>
  <span class="f-item f-match"><i class="cb"></i><span>Mat<u>c</u>h case</span></span>
</div>

<footer class="taskbar">
  <svg class="orb"><use href="#orb"/></svg>
  <div class="task t1"><svg><use href="#chrome"/></svg><span>Inbox - venkiveer...</span></div>
  <div class="task t2"><svg><use href="#firefox"/></svg><span>Deal Makers - Mo...</span></div>
  <div class="task t3"><svg><use href="#firefox"/></svg><span>Sdar.com Staging...</span></div>
  <svg class="folder"><use href="#folder"/></svg>
  <div class="task t4"><svg><use href="#skype"/></svg><span>Skype™ - venkiveer</span></div>
  <div class="task t5"><svg><use href="#zilla"/></svg><span>scn - scni2652@s...</span></div>
  <div class="tray"><span class="tri tri-up"></span><svg class="i16"><use href="#flag"/></svg><svg class="i16"><use href="#batt"/></svg><svg class="i14"><use href="#signal"/></svg><svg class="i16"><use href="#drive"/></svg></div>
  <div class="clock">1:04 AM<br>1/8/2013</div>
  <div class="peek"></div>
</footer>
</body>
</html>
```

FILE: styles.css
```css
* { box-sizing: border-box; }
body { margin: 0; width: 1280px; height: 800px; overflow: hidden; display: flex; flex-direction: column; font-family: "Open Sans", "Noto Sans", sans-serif; font-size: 12px; color: #000; background: #fff; }
svg { display: block; flex: none; }
.gradients { position: absolute; width: 0; height: 0; }
.sprite { display: none; }
h1, h2, h3, p { margin: 0; }
.i8 { width: 8px; height: 8px; }
.i12 { width: 12px; height: 12px; }
.i14 { width: 14px; height: 14px; }
.i16 { width: 16px; height: 16px; }
.i18 { width: 18px; height: 18px; }
.i30 { width: 30px; height: 30px; }
.tri { display: inline-block; flex: none; width: 0; height: 0; border: 4px solid transparent; border-top-color: #222; border-bottom: 0; }
.tri-white { border-top-color: #fff; margin-left: 4px; }
.tri-gray { border-width: 3px; border-top-color: #666; border-bottom: 0; }

/* Tab strip */
.tabbar { height: 26px; flex: none; display: flex; background: linear-gradient(90deg, #3a619b, #14458c 35%, #0b3b85 60%, #14458f 85%, #2b5795); position: relative; }
.fx-menu { width: 93px; height: 18px; margin-left: 1px; background: linear-gradient(#f0a04a, #e0700f); border: 1px solid #8f4a12; border-top: 0; border-radius: 0 0 4px 4px; color: #fff; font-weight: 600; font-size: 12px; line-height: 17px; padding-left: 19px; display: flex; align-items: center; letter-spacing: -.2px; text-shadow: 0 1px 1px #7a3c00; }
.tabs { display: flex; align-items: flex-end; margin-left: 5px; }
.tab { width: 170.500px; height: 24px; margin-right: 1px; display: flex; align-items: center; padding-left: 5px; background: linear-gradient(#d0dae6, #b9c8d8); border: 1px solid #5c7592; border-bottom: 0; border-radius: 3px 3px 0 0; }
.tab span { width: 133px; margin-left: 2px; padding-top: 2px; white-space: nowrap; letter-spacing: -.17px; }
.tab svg:last-child { color: #8a98a8; }
.tab-active { background: linear-gradient(#fdfeff, #edf4fc); }
.tab-active svg:last-child { color: #444; }
.tab-new { width: 27px; height: 24px; display: flex; align-items: center; justify-content: center; background: linear-gradient(#d0dae6, #b9c8d8); border-radius: 3px 3px 0 0; }
.winctl { position: absolute; left: 1173px; top: 0; height: 18px; width: 105px; display: flex; border: 1px solid #cbd8e8; border-top: 0; border-radius: 0 0 5px 5px; overflow: hidden; background: linear-gradient(#8ba4c4, #3b5f91); }
.winctl span { width: 28px; display: flex; align-items: center; justify-content: center; border-right: 1px solid #b5c5da; color: #fff; }
.winctl .w-close { width: 48px; border: 0; background: linear-gradient(#d98a7d, #b52c14 50%, #d05030); }
.w-min { width: 11px; height: 4px; background: #fff; border: 1px solid #555; margin-top: 4px; }
.w-max { width: 9px; height: 9px; border: 2px solid #fff; outline: 1px solid #556; }

/* Location bar */
.navbar { height: 36px; flex: none; display: flex; align-items: center; background: linear-gradient(#edf4fc, #deeaf8); }
.back { width: 32px; height: 32px; margin-left: 4px; margin-right: -5px; z-index: 1; }
.url { width: 780px; height: 24px; background: #fff; border: 1px solid #a9b9cb; border-radius: 2px; display: flex; align-items: center; padding-left: 9px; padding-right: 5px; }
.address { margin-left: 4px; color: #777; letter-spacing: -.2px; white-space: nowrap; }
.address b { color: #000; font-weight: 400; }
.url-icons { margin-left: auto; display: flex; align-items: center; gap: 4px; }
.tiny { font: 7.500px/8px "DejaVu Sans Mono", monospace; color: #6d7599; letter-spacing: -.5px; width: 16px; text-align: center; }
.php { background: #7377ad; width: 16px; height: 16px; font: 10px/14px "Liberation Sans", sans-serif; text-align: center; color: #000; }
.url-icons svg:nth-of-type(4) { margin-left: 2px; }
.tri-hollow { border-width: 5px; border-top-width: 7px; border-top-color: #ccd3dd; border-bottom: 0; margin: 0 1px; }
.search { width: 237px; height: 24px; margin-left: 6px; background: #fff; border: 1px solid #a9b9cb; border-radius: 2px; display: flex; align-items: center; padding: 0 4px; gap: 5px; }
.search em { color: #777; flex: 1; letter-spacing: -.2px; }
.addons { flex: 1; display: grid; grid-template-columns: 36px 20px 27px 36px 27px 25px 27px 12px; align-items: center; padding-left: 13px; }
.tri-div { position: relative; }
.tri-div::before { content: ""; position: absolute; left: -8px; top: -12px; height: 20px; border-left: 1px solid #bbc9da; }
.ess { width: 16px; height: 16px; background: #df0b70; color: #fff; border: 1px solid #601030; font: italic bold 15px/14px "DejaVu Sans", sans-serif; text-align: center; }

/* Developer toolbar */
.devbar { height: 27px; flex: none; display: grid; grid-template-columns: 70px 73px 53px 65px 70px 95px 106px 72px 63px 62px 97px 80px 1fr; align-items: center; padding-left: 3px; background: #dbe8f7; border-bottom: 1px solid #a9bfd6; }
.devbar span { display: flex; align-items: center; white-space: nowrap; letter-spacing: -.33px; }
.devbar span svg { margin-right: 5px; }
.devbar .tri { border-width: 2.500px; border-top-width: 3px; border-bottom: 0; margin-left: 1px; }
.dev-status { justify-self: end; display: flex; align-items: center; gap: 7px; padding-right: 4px; }

/* Page */
.viewport { height: 644px; flex: none; display: flex; position: relative; overflow: hidden; background: #fff; }
.page { width: 1243px; margin: 10px 11px 0 10px; font-family: "Liberation Sans", Arial, sans-serif; flex: none; display: flex; flex-direction: column; height: 634px; }
.brand { height: 54px; flex: none; border-radius: 9px 9px 0 0; background: linear-gradient(#8b8b8b, #4a4a4a 50%, #101010) 0 0 / 100% 45px no-repeat, linear-gradient(#2390cc, #0c6ba5) 0 45px / 100% 9px no-repeat; display: flex; justify-content: space-between; padding: 0 7px 0 28px; }
.brand h1 { font-size: 19.400px; line-height: 44px; color: #fff; }
.brand-logo { width: 146px; height: 32px; margin-top: 6px; }
.menubar { height: 27px; flex: none; background: #efefef; border: 1px solid #ccc; display: flex; justify-content: space-between; }
.menu { display: grid; grid-template-columns: 47px 59px 64px 70px 98px 87px 50px; }
.menu a { height: 25px; text-align: center; border-right: 1px solid #ccc; font: bold 11px/27px "Liberation Sans", Arial, sans-serif; letter-spacing: .35px; color: #808080; }
.status { display: grid; grid-template-columns: 78px 77px 38px 78px 66px; font-size: 11px; }
.status span { display: flex; align-items: center; white-space: nowrap; gap: 3px; letter-spacing: .05px; }
.blue { color: #146295; }
.titlewrap { height: 75px; flex: none; padding: 10px 10px 0; background: #fbfbfb; border: solid #ccc; border-width: 0 1px; }
.titlebox { height: 65px; border: 1px solid #ccc; border-radius: 11px; background: #f4f4f4; display: flex; align-items: center; padding-left: 11px; }
.article-icon { width: 48px; height: 50px; margin-bottom: 4px; }
.titlebox h2 { margin-left: 11px; margin-bottom: 4px; font-size: 21.250px; color: #146295; white-space: nowrap; }
.actions { margin-left: auto; display: grid; grid-template-columns: 42px 88px 72px 58px 50px; font-size: 10.700px; color: #146295; }
.actions a { display: flex; flex-direction: column; align-items: center; gap: 2px; height: 52px; padding-top: 3px; white-space: nowrap; line-height: 13px; }
.actions .divided { border-left: 1px solid #ccc; padding-left: 3px; }
.editbox { margin: 0; flex: 1; display: flex; align-items: flex-start; border: solid #ccc; border-width: 0 1px; padding: 20px 10px 0; position: relative; }
.editbox::before { content: ""; position: absolute; left: 10px; right: 10px; top: 20px; bottom: -14px; border: 1px solid #ccc; border-radius: 11px; background: #f4f4f4; }
.article-form { position: relative; width: 699px; height: 460px; margin: 29px 0 0 21px; background: #fff; border: 1px solid #ccc; padding-left: 17px; }
.article-form h3 { position: absolute; top: -9px; left: 17px; font-size: 13px; line-height: 17px; color: #146295; letter-spacing: .2px; background: linear-gradient(#f4f4f4 50%, #fff 50%); }
.rows { margin-top: 15px; display: grid; grid-template-columns: 140px 1fr; grid-template-rows: 27px 29px 27px 27px 27px 26px 28px 26px 28px 26px; align-items: center; font-size: 12.300px; letter-spacing: .15px; }
.rows sup { color: #e8810e; font-size: 11px; line-height: 0; vertical-align: 2px; }
.rows > div { display: flex; }
.tight { letter-spacing: -.15px; }
.input { display: block; height: 17px; border: 1px solid #b5b5b5; background: #fff; }
.in-title { width: 239px; height: 22px; background: #d5eeff; }
.in-alias { width: 199px; margin-top: 1px; }
.select { display: flex; height: 17px; border: 1px solid #b5b5b5; margin-top: 1px; background: #fff; font-size: 10.500px; letter-spacing: 0; }
.select b { flex: 1; font-weight: 400; line-height: 17px; padding-left: 4px; }
.select i { width: 17px; border: 1px solid #777; background: linear-gradient(#f6f6f6, #d3d3d3); display: flex; align-items: center; justify-content: center; }
.select i::before { content: ""; border: 4px solid transparent; border-top-color: #000; border-bottom: 0; margin-top: 3px; }
.s-cat { width: 200px; margin-top: 0; } .s-cat b { background: #ffffd9; border: 1px dotted #000; line-height: 16px; padding-left: 3px; }
.s-status { width: 85px; margin-top: -1px; } .s-access { width: 77px; margin-top: -1px; } .s-feat { width: 45px; } .s-lang { width: 84px; }
.pill { display: block; height: 22px; border: 1px solid #c2c2c2; border-radius: 8px; background: linear-gradient(#fafafa 40%, #dedede); color: #333; font-size: 11px; line-height: 21px; text-align: center; letter-spacing: 0; white-space: nowrap; }
.pill-perm { width: 97px; font-size: 10.300px; line-height: 23px; padding-right: 5px; margin-top: -3px; }
.pill-user { width: 68px; margin: -4px 0 0 5px; line-height: 20px; font-size: 10.800px; }
.idval { margin-left: 1px; color: #555; font-weight: 700; font-size: 11px; }
.toggle { height: 29px; padding-left: 5px; font-size: 11px; line-height: 29px; letter-spacing: -.2px; }
.editor { width: 663px; height: 150px; border: 1px solid #ccc; }
.tools { height: 105px; background: #f0f0ee; border-bottom: 1px solid #ccc; padding: 2px 0 0 3px; font: 11px "DejaVu Sans Condensed", "DejaVu Sans", sans-serif; }
.trow { display: flex; gap: 1px; height: 22px; margin-bottom: 4px; }
.sep { width: 1px; margin: 0 2px 0 5px; background: #ccc; }
.btn { width: 22px; height: 22px; border: 1px solid #ccc; display: flex; align-items: center; justify-content: center; color: #333; }
.btn svg { width: 20px; height: 20px; }
.wide { width: 32px; justify-content: flex-start; }
.wide > i, .list > i { width: 10px; height: 20px; margin-left: auto; flex: none; border-left: 1px solid #ccc; display: flex; align-items: center; justify-content: center; background: #f0f0ee; }
.wide > i::before, .list > i::before { content: ""; width: 7px; height: 5px; background: #2e98dc; clip-path: polygon(0 0, 100% 0, 100% 30%, 60% 100%, 40% 100%, 0 30%); }
.list { width: 87px; height: 22px; border: 1px solid #ccc; background: #fff; display: flex; align-items: center; padding-left: 3px; color: #000; letter-spacing: 0; }
.off svg, .off .case, .off i { opacity: .32; }
.faint .case { opacity: .2; }
.off2 > *, .off2 { color: #a8a8a8; }
.off2 svg { opacity: .5; }
.flip svg { transform: scaleX(-1); }
.serif { font: bold 13px "Liberation Serif", serif; }
.it { font-style: italic; } .un { text-decoration: underline; } .st { text-decoration: line-through; }
.red { text-decoration-color: #e88; font-size: 15px; font-weight: 400; } .bl { text-decoration-color: #8ad; font-size: 15px; font-weight: 400; }
.sm { font-size: 12px; }
.ba { line-height: 12px; }
.ba sub { font-size: 12px; vertical-align: -4px; line-height: 0; }
.case { font: bold 11px "Liberation Serif", serif; width: 20px; text-align: center; }
.key { width: 15px; height: 15px; border: 1px solid #aaa; background: #fafafa; font: bold 17px/19px "Liberation Serif", serif; text-align: center; }
.omega { font-size: 13px; line-height: 13px; }
.fore { width: 16px; height: 17px; margin-left: 2px; border-bottom: 4px solid #000; font: bold 13px/13px "Liberation Serif", serif; text-align: center; }
.hr { width: 16px; border-top: 1px solid #555; }
.para { font: bold 14px "Liberation Serif", "DejaVu Sans", serif; }
.quotes { font: bold 16px/24px "Liberation Serif", serif; align-items: flex-start; }
.abbr { font: 5.500px "DejaVu Sans", sans-serif; }
.canvas { display: flex; justify-content: flex-end; height: 40px; }
.canvas-bar { width: 16px; background: #f0f0f0; border-left: 1px solid #ddd; }
.options { position: relative; width: 480px; margin: 29px 0 0 10px; display: flex; flex-direction: column; gap: 3px; }
.acc { border: 1px solid #ccc; background: #fafafa; }
.acc h3 { height: 20px; display: flex; align-items: center; padding-left: 11px; font-size: 13px; color: #146295; letter-spacing: .08px; }
.acc.open { height: 193px; background: #fff; }
.acc.open h3 { height: 21px; background: #fafafa; border-bottom: 1px solid #ccc; letter-spacing: .03px; }
.arr { width: 14px; }
.arr::before { content: ""; display: block; width: 0; border: 4.500px solid transparent; border-left: 5px solid #1f86b8; border-right: 0; margin-left: 1px; }
.arr-down::before { border: 4.500px solid transparent; border-top: 5px solid #1c93cc; border-bottom: 0; margin-left: 0; }
.pub { display: grid; grid-template-columns: 150px 1fr; grid-template-rows: 27px 27px 28px 28px 28px; align-items: center; padding: 4px 0 0 19px; font-size: 12.300px; letter-spacing: .05px; }
.pub > div { display: flex; align-items: center; height: 19px; }
.pub .i18 { margin-left: 5px; margin-top: 2px; }
.w100 { width: 99px; } .w108 { width: 107px; }

/* Markup over the form */
.ring { position: absolute; left: 178px; top: 273px; width: 242px; height: 51px; border: 2px solid #e4202a; border-radius: 50%; }
.note { position: absolute; left: 429px; top: 282px; font: 16px/19px "DejaVu Sans", sans-serif; color: #e01216; letter-spacing: -.03px; white-space: nowrap; }
.note span { letter-spacing: .15px; }

.scrollbar { width: 16px; background: #f0f0f0; border-left: 1px solid #e2e2e2; display: flex; flex-direction: column; align-items: center; }
.sb-up { border: 4px solid transparent; border-bottom-color: #333; border-top: 0; margin: 7px 0; }
.thumb { width: 15px; height: 251px; border: 1px solid #999; border-radius: 2px; background: linear-gradient(90deg, #f6f6f6, #dcdcdc 50%, #c2c2c6); display: flex; align-items: center; justify-content: center; }
.thumb i { width: 7px; height: 8px; background: repeating-linear-gradient(#555 0 1px, transparent 1px 3px); }
.sb-down { border: 4px solid transparent; border-top-color: #333; border-bottom: 0; margin-top: auto; margin-bottom: 7px; }

/* Find bar */
.findbar { height: 27px; flex: none; display: flex; align-items: center; background: #dbe8f7; border-top: 1px solid #a9bccf; padding-left: 9px; color: #111; letter-spacing: -.3px; }
.findbar > svg { color: #555; }
.f-label { width: 50px; padding-left: 15px; }
.f-input { width: 145px; height: 21px; background: #fff; border: 1px solid #c3d2e2; border-radius: 2px; line-height: 19px; padding-left: 4px; }
.f-item { display: flex; align-items: center; gap: 5px; white-space: nowrap; }
.f-item span { flex: none; }
.f-next { width: 51px; margin-left: 8px; }
.f-prev { width: 71px; }
.f-high { width: 98px; gap: 7px; }
.upside { transform: rotate(180deg); }
.cb { width: 13px; height: 13px; border: 1px solid #888; background: linear-gradient(135deg, #ddd, #fff); }

/* Taskbar */
.taskbar { height: 40px; flex: none; display: flex; align-items: flex-start; background: linear-gradient(#0b2147, #06204b 30%, #021c49); border-top: 1px solid #0a1526; color: #fff; position: relative; letter-spacing: -.4px; }
.orb { width: 38px; height: 38px; margin: 0 14px 0 8px; }
.task { width: 158px; height: 38px; border: 1px solid #95a6bb; border-radius: 3px; background: linear-gradient(170deg, #95a3b5 0, #4a6080 35%, #1c3762 45%, #29446f); display: flex; align-items: center; white-space: nowrap; }
.task svg { width: 30px; height: 30px; margin-left: 9px; }
.task span { margin-left: 5px; }
.t1 { letter-spacing: -.3px; }
.t1 svg { width: 28px; }
.t1 span { margin-left: 6px; }
.t2 { margin-left: 4px; width: 159px; border-right: 0; letter-spacing: -.3px; }
.t3 { width: 159px; letter-spacing: -.35px; background: linear-gradient(170deg, #c1c9d5 0, #8c9bb1 40%, #6e7f9b 50%, #76869f); }
.folder { width: 38px; height: 34px; margin: 2px 14px 0; }
.t4 { letter-spacing: -.25px; }
.t5 { margin-left: 4px; }
.t5 svg { width: 30px; height: 32px; margin-left: 8px; }
.t5 span { margin-left: 6px; letter-spacing: -.25px; }
.tray { position: absolute; left: 1078px; top: 12px; display: flex; align-items: center; gap: 9px; height: 16px; }
.tri-up { border: 4px solid transparent; border-bottom-color: #fff; border-top: 0; margin-right: 3px; }
.clock { position: absolute; left: 1195px; top: 4px; width: 67px; text-align: center; font-size: 12px; line-height: 17px; letter-spacing: -.3px; }
.peek { position: absolute; right: 0; top: 0; width: 9px; height: 39px; border: 1px solid #657d9e; background: linear-gradient(#51688b, #142e59); }
```
